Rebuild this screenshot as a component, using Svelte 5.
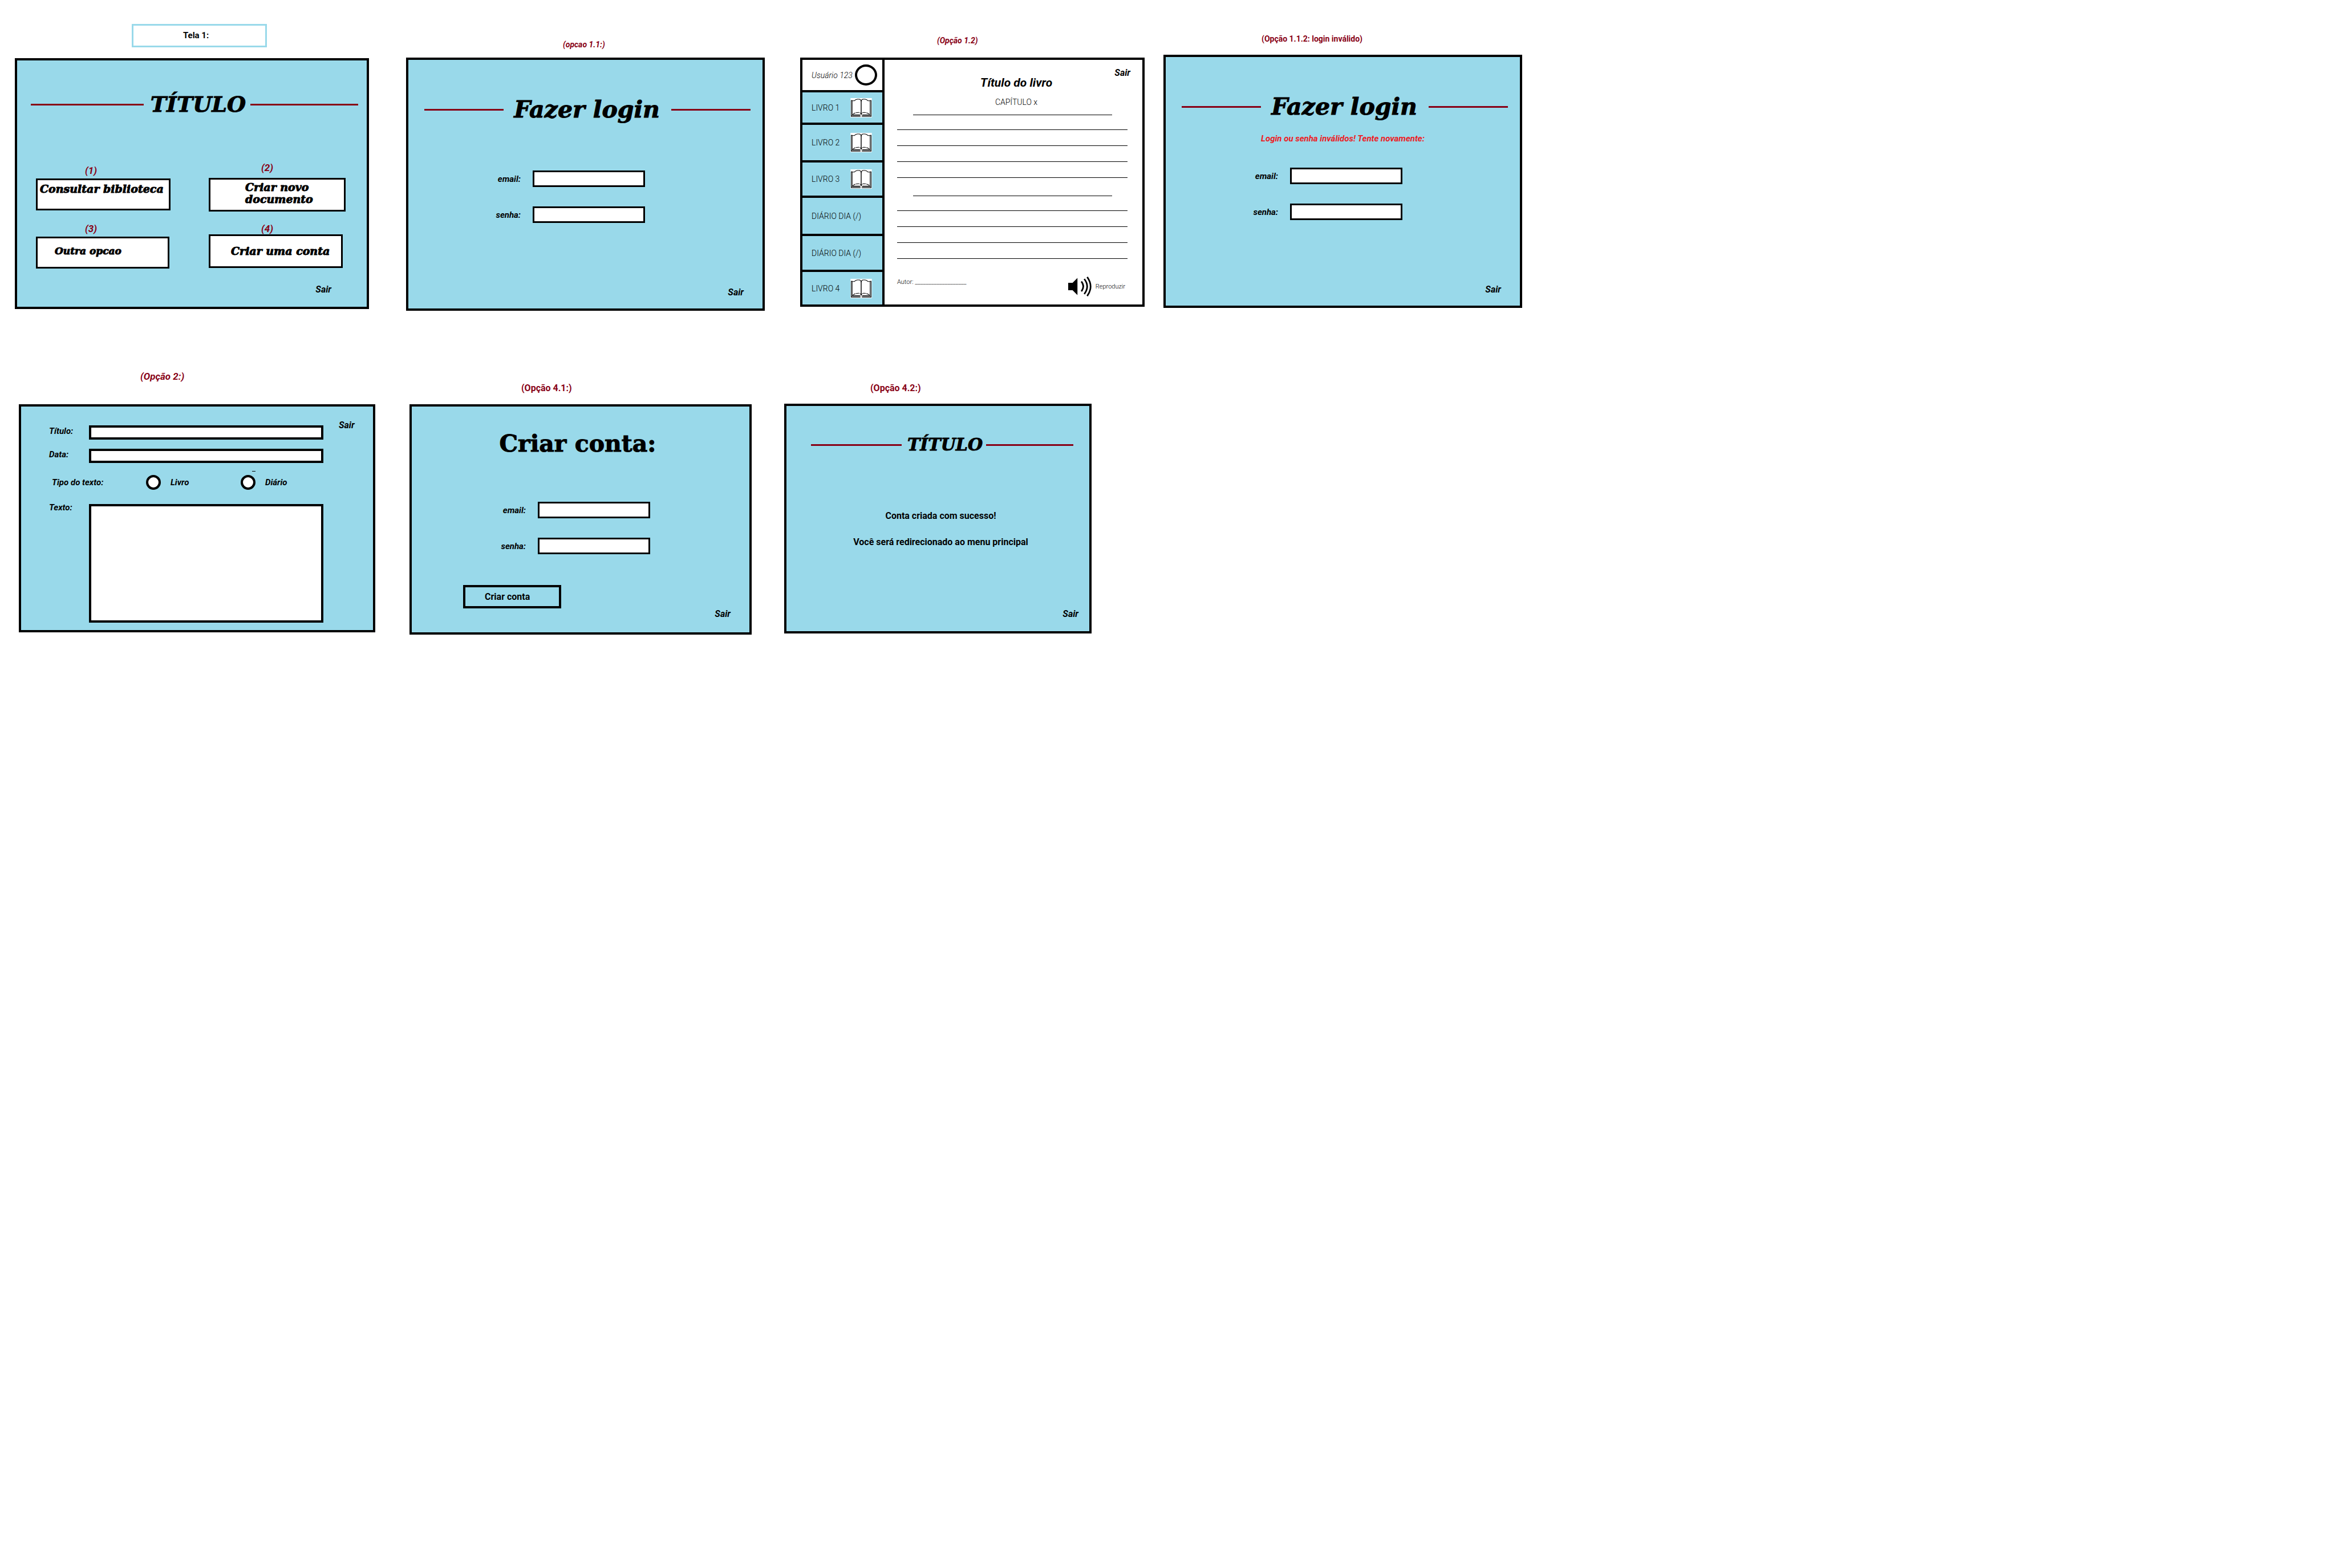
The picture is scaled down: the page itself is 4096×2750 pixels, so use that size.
<script>
  const lines = [1, 2, 3, 4];
  const shelf = [
    { name: 'LIVRO 1', book: true },
    { name: 'LIVRO 2', book: true },
    { name: 'LIVRO 3', book: true },
    { name: 'DIÁRIO DIA (/)', book: false },
    { name: 'DIÁRIO DIA (/)', book: false },
    { name: 'LIVRO 4', book: true }
  ];
</script>

{#snippet book()}
  <svg class="book" viewBox="0 0 44 40" aria-hidden="true">
    <rect width="44" height="40" fill="#fff" />
    <g fill="none" stroke="#000" stroke-width="1.2">
      <path d="M4 5H1.500V38H20.500M40 5H42.500V38H23.500" />
      <path d="M3.500 5V34.500H20M40.500 5V34.500H24" />
      <path d="M2 36.300H20.500M42 36.300H23.500" />
      <path d="M3.500 5.500H8Q11 2.500 14 2.300H18Q21 2.500 22 6Q23 2.500 26 2.300H30Q33 2.500 36 5.500H40.500" />
      <path d="M4 34L8 31.500Q12 29.500 17 29.600Q20.500 30 22 33Q23.500 30 27 29.600Q32 29.500 36 31.500L40 34" stroke-dasharray="7 1" />
      <path d="M22 5V32" stroke-width="1.700" />
    </g>
    <path d="M20.500 32H23.500L22.700 34.500H21.300Z" />
    <path d="M20 36Q22 39.500 24 36" fill="#fff" stroke="#888" stroke-width=".6" />
  </svg>
{/snippet}

{#snippet credentials(id)}
  <label for="{id}-email">email:</label>
  <input id="{id}-email" type="email" />
  <label for="{id}-senha">senha:</label>
  <input id="{id}-senha" type="password" />
{/snippet}

{#snippet login(id, error)}
  <section class="panel login">
    <h2 class="banner"><span class="display">Fazer login</span></h2>
    <p class="error">{error}</p>
    <form class="credentials">{@render credentials(id)}</form>
    <button class="exit">Sair</button>
  </section>
{/snippet}

<main>
  <div class="row first">
    <figure>
      <figcaption class="home-caption"><span>Tela 1:</span></figcaption>
      <section class="panel home">
        <h1 class="banner"><span class="display">TÍTULO</span></h1>
        <nav class="menu">
          <div class="column">
            <div class="item top">
              <span class="number">(1)</span>
              <button class="display">Consultar biblioteca</button>
            </div>
            <div class="item other">
              <span class="number">(3)</span>
              <button class="display">Outra opcao</button>
            </div>
          </div>
          <div class="column right">
            <div class="item create">
              <span class="number">(2)</span>
              <button class="display">Criar novo<br />documento</button>
            </div>
            <div class="item account">
              <span class="number">(4)</span>
              <button class="display">Criar uma conta</button>
            </div>
          </div>
        </nav>
        <button class="exit">Sair</button>
      </section>
    </figure>

    <figure>
      <figcaption class="login-caption">(opcao 1.1:)</figcaption>
      {@render login('login', '')}
    </figure>

    <figure>
      <figcaption class="reader-caption">(Opção 1.2)</figcaption>
      <section class="panel reader">
        <aside>
          <div class="user"><span>Usuário 123</span><i class="avatar"></i></div>
          {#each shelf as entry}
            <button class="entry">
              <span>{entry.name}</span>
              {#if entry.book}{@render book()}{/if}
            </button>
          {/each}
        </aside>
        <article>
          <header>
            <h2>Título do livro</h2>
            <button class="exit">Sair</button>
          </header>
          <p class="chapter">CAPÍTULO x</p>
          {#each [1, 2] as paragraph}
            <div class="paragraph">
              <hr class="short" />
              {#each lines as line}<hr />{/each}
            </div>
          {/each}
          <footer>
            <span>Autor: ___________________</span>
            <button class="play">
              <svg viewBox="0 0 48 41" aria-hidden="true">
                <path d="M0 13H9L19 3V38L9 28H0Z" />
                <g fill="none" stroke="#000" stroke-width="3.200">
                  <path d="M27 10Q35 20 27 30.500" />
                  <path d="M33 5Q45 20.500 33 36" />
                  <path d="M39 1Q53 20.500 39 40" />
                </g>
              </svg>
              Reproduzir
            </button>
          </footer>
        </article>
      </section>
    </figure>

    <figure>
      <figcaption class="invalid-caption">(Opção 1.1.2: login inválido)</figcaption>
      {@render login('retry', 'Login ou senha inválidos! Tente novamente:')}
    </figure>
  </div>

  <div class="row second">
    <figure>
      <figcaption class="document-caption">(Opção 2:)</figcaption>
      <section class="panel document">
        <form>
          <label for="doc-title">Título:</label>
          <input id="doc-title" type="text" />
          <label for="doc-date">Data:</label>
          <input id="doc-date" type="text" />
          <div class="kinds" role="radiogroup" aria-labelledby="kind">
            <span id="kind">Tipo do texto:</span>
            <label><input type="radio" name="kind" />Livro</label>
            <label class="diary"><input type="radio" name="kind" />Diário</label>
          </div>
          <label class="body-label" for="doc-body">Texto:</label>
          <textarea id="doc-body"></textarea>
        </form>
        <div class="side"><button class="exit">Sair</button></div>
      </section>
    </figure>

    <figure>
      <figcaption class="signup-caption">(Opção 4.1:)</figcaption>
      <section class="panel signup">
        <h2 class="display">Criar conta:</h2>
        <form class="credentials">{@render credentials('signup')}</form>
        <button class="submit">Criar conta</button>
        <button class="exit">Sair</button>
      </section>
    </figure>

    <figure>
      <figcaption class="success-caption">(Opção 4.2:)</figcaption>
      <section class="panel success">
        <h2 class="banner"><span class="display">TÍTULO</span></h2>
        <p>Conta criada com sucesso!</p>
        <p>Você será redirecionado ao menu principal</p>
        <button class="exit">Sair</button>
      </section>
    </figure>
  </div>
</main>

<style>
  :global(body) {
    background: #fff;
  }

  main {
    color: #000;
    font: 16px/20px Roboto, sans-serif;
  }

  main :is(*, ::before, ::after) {
    box-sizing: border-box;
  }

  figure,
  p,
  h1,
  h2 {
    margin: 0;
  }

  button {
    padding: 0;
    border: 0;
    background: none;
    color: inherit;
    font: inherit;
    text-align: left;
    cursor: pointer;
  }

  input,
  textarea {
    width: 100%;
    margin: 0;
    border: 3px solid #000;
    border-radius: 0;
    background: #fff;
    font: inherit;
  }

  .display {
    font-family: 'DejaVu Serif', serif;
    font-weight: 700;
    font-style: italic;
    white-space: nowrap;
    -webkit-text-stroke: 1px #000;
  }

  /* Board */
  .row {
    display: grid;
    align-items: start;
  }

  .first {
    grid-template-columns: 621fr 65fr 629fr 62fr 604fr 33fr 629fr 1427fr;
    padding-left: 26px;
  }

  .second {
    grid-template-columns: 625fr 60fr 600fr 57fr 539fr 2182fr;
    margin-top: 105px;
    padding-left: 33px;
  }

  figure:nth-child(2) {
    grid-column: 3;
  }

  figure:nth-child(3) {
    grid-column: 5;
  }

  figure:nth-child(4) {
    grid-column: 7;
  }

  figcaption {
    color: #880015;
    font-weight: 700;
    font-size: 14px;
    white-space: nowrap;
  }

  .second figcaption {
    font-size: 16px;
  }

  .home-caption {
    padding: 42px 0 19px 33%;
    color: #000;
  }

  .home-caption span {
    display: block;
    width: 57%;
    padding: 8px 0 9px 87px;
    border: 3px solid #99d9ea;
    font-size: 15px;
    line-height: 18px;
  }

  .login-caption {
    padding: 68px 0 13px 275px;
    font-style: italic;
  }

  .reader-caption {
    padding: 61px 0 20px 240px;
    font-style: italic;
  }

  .invalid-caption {
    padding: 58px 0 18px 172px;
  }

  .second .document-caption {
    padding: 0 0 39px 213px;
    font-style: italic;
    font-size: 17px;
  }

  .signup-caption {
    padding: 21px 0 18px 196px;
  }

  .success-caption {
    padding: 21px 0 17px 151px;
  }

  .panel {
    display: flex;
    flex-direction: column;
    border: 4px solid #000;
    background: #99d9ea;
  }

  .exit {
    align-self: flex-end;
    font-weight: 700;
    font-style: italic;
  }

  .banner {
    display: flex;
    align-items: center;
    font-size: 38px;
    line-height: 50px;
  }

  .banner::before,
  .banner::after {
    content: '';
    flex: 1;
    height: 3px;
    background: #880015;
  }

  /* Home */
  .home {
    padding: 52px 0 20px;
  }

  .home .banner {
    padding: 0 15px 0 24px;
  }

  .home .banner::before {
    flex: 198;
  }

  .home .banner::after {
    flex: 189;
  }

  .home .banner .display {
    margin: 0 8px 0 12px;
  }

  .menu {
    display: grid;
    grid-template-columns: 236fr 240fr;
    column-gap: 67px;
    margin: 76px 37px 27px 33px;
  }

  .column {
    display: flex;
    flex-direction: column;
    gap: 22px;
    padding-top: 5px;
  }

  .column.right {
    gap: 20px;
    padding-top: 0;
  }

  .item {
    display: flex;
    flex-direction: column;
    gap: 4px;
  }

  .number {
    padding-left: 86px;
    color: #880015;
    font-weight: 700;
    font-style: italic;
    font-size: 17px;
  }

  .right .number {
    padding-left: 92px;
  }

  .item button {
    display: flex;
    align-items: center;
    min-height: 56px;
    border: 3px solid #000;
    background: #fff;
    font-size: 19px;
    line-height: 21px;
  }

  .top button {
    align-items: flex-start;
    padding: 5px 4px;
  }

  .item.create {
    gap: 8px;
  }

  .right button {
    min-height: 59px;
  }

  .create button {
    padding: 0 0 6px 61px;
  }

  .other button {
    width: 99%;
    padding: 0 0 6px 30px;
    font-size: 17px;
  }

  .item.account {
    gap: 0;
  }

  .account button {
    width: 98%;
    padding-left: 36px;
  }

  .home .exit {
    margin-right: 62px;
  }

  /* Login */
  .login {
    padding: 62px 0 18px;
  }

  .login .banner {
    padding: 0 21px 0 28px;
    font-size: 41px;
  }

  .login .banner .display {
    margin: 0 20px 0 18px;
  }

  .error {
    min-height: 20px;
    margin: 21px 0 41px;
    color: #ed1c24;
    font-weight: 700;
    font-style: italic;
    font-size: 15px;
    text-align: center;
  }

  .credentials {
    display: grid;
    grid-template-columns: 218fr 197fr 206fr;
    row-gap: 34px;
    align-items: center;
  }

  .credentials label {
    grid-column: 1;
    padding-right: 21px;
    font-weight: 700;
    font-style: italic;
    font-size: 15px;
    text-align: right;
  }

  .credentials input {
    height: 29px;
  }

  .login .exit {
    margin: 112px 33px 0 0;
  }

  /* Reader */
  .reader {
    display: grid;
    grid-template-columns: 144fr 452fr;
    background: #fff;
    font-weight: 300;
  }

  aside {
    display: grid;
    grid-template-rows: 57px 57px 66px 62px 67px 63px 57px;
    border-right: 4px solid #000;
    font-size: 14px;
  }

  .user,
  .entry {
    display: flex;
    align-items: center;
    justify-content: space-between;
    padding: 0 18px 0 16px;
    border-bottom: 4px solid #000;
    white-space: nowrap;
  }

  .user {
    padding-right: 9px;
    font-style: italic;
  }

  .entry {
    background: #99d9ea;
  }

  .entry:last-child {
    border-bottom: 0;
  }

  .avatar {
    flex: none;
    width: 39px;
    height: 37px;
    border: 4px solid #000;
    border-radius: 50%;
  }

  .book {
    width: 38px;
    height: 34px;
  }

  article header {
    display: grid;
    grid-template-columns: 1fr auto 1fr;
    padding: 13px 21px 0 31px;
  }

  article h2 {
    grid-column: 2;
    padding-top: 15px;
    font-style: italic;
    font-size: 21px;
    line-height: 24px;
  }

  header .exit {
    align-self: start;
    justify-self: end;
  }

  .chapter {
    margin: 12px 0;
    padding-left: 10px;
    font-size: 14px;
    text-align: center;
  }

  hr {
    height: 1px;
    margin: 0 26px 27px 22px;
    border: 0;
    background: #000;
  }

  hr.short {
    margin: 0 53px 25px 50px;
  }

  hr:last-child {
    margin-bottom: 31px;
  }

  footer {
    display: flex;
    align-items: flex-start;
    justify-content: space-between;
    padding: 0 30px 0 22px;
    font-size: 11px;
  }

  .play {
    display: flex;
    align-items: center;
    gap: 7px;
  }

  .play svg {
    width: 41px;
    height: 35px;
  }

  /* Document */
  .document {
    display: grid;
    grid-template-columns: 530fr 87fr;
  }

  .document form {
    display: grid;
    grid-template-columns: 119fr 411fr;
    padding: 33px 0 13px;
    font-weight: 700;
    font-style: italic;
    font-size: 15px;
  }

  .document form > label {
    padding-left: 49px;
  }

  .document form > input {
    height: 25px;
    margin-bottom: 16px;
    border-width: 4px;
  }

  .kinds {
    display: grid;
    grid-column: 1 / -1;
    grid-template-columns: 219fr 166fr 145fr;
    align-items: center;
    margin: 5px 0 25px;
  }

  .kinds > span {
    padding-left: 54px;
  }

  .kinds label {
    display: flex;
    position: relative;
    align-items: center;
    gap: 17px;
  }

  .kinds input {
    flex: none;
    width: 26px;
    height: 26px;
    border: 4px solid #000;
    border-radius: 50%;
    appearance: none;
  }

  .diary::before {
    content: '';
    position: absolute;
    top: -7px;
    left: 20px;
    width: 6px;
    height: 1px;
    background: #000;
  }

  .body-label {
    line-height: 12px;
  }

  textarea {
    display: block;
    height: 208px;
    border-width: 4px;
    resize: none;
  }

  .side {
    padding: 23px 0 0 27px;
  }

  /* Sign-up */
  .signup {
    padding: 40px 0 22px;
  }

  .signup h2 {
    padding-right: 10px;
    font-style: normal;
    font-size: 41px;
    line-height: 50px;
    text-align: center;
  }

  .signup .credentials {
    grid-template-columns: 221fr 197fr 174fr;
    margin: 77px 0 54px;
  }

  .submit {
    width: 29%;
    margin-left: 90px;
    padding: 7px 0 6px 34px;
    border: 4px solid #000;
    font-weight: 700;
  }

  .signup .exit {
    margin-right: 33px;
  }

  /* Success */
  .success {
    padding: 43px 0 20px;
    font-weight: 700;
    text-align: center;
  }

  .success .banner {
    margin-bottom: 90px;
    padding: 0 28px 0 43px;
    font-size: 30px;
  }

  .success .banner::before {
    flex: 159;
  }

  .success .banner::after {
    flex: 153;
  }

  .success .banner .display {
    margin: 0 6px 0 10px;
  }

  .success p {
    margin-bottom: 26px;
    padding-left: 10px;
  }

  .success .exit {
    margin: 80px 19px 0 0;
  }
</style>
